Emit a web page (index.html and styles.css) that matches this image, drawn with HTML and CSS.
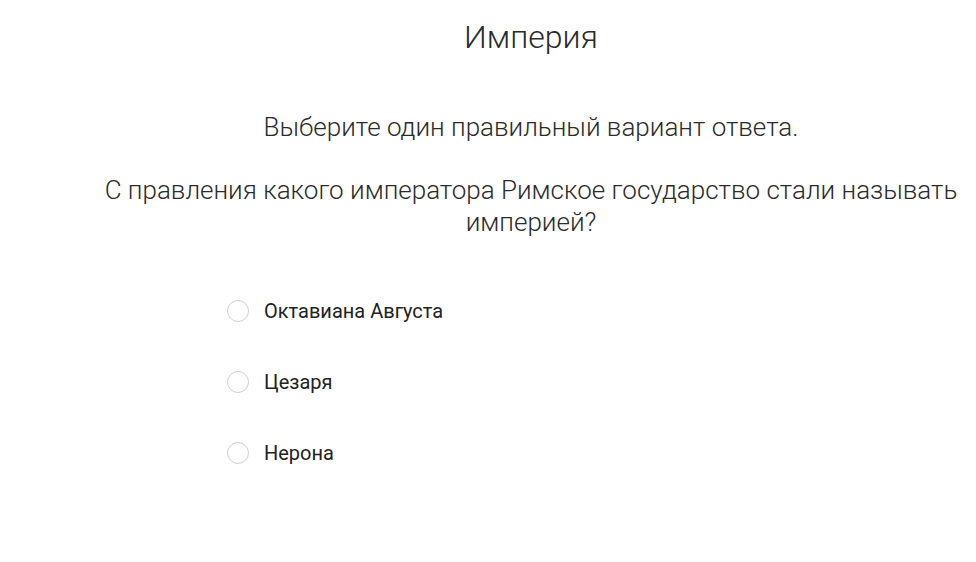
FILE: index.html
```html
<!DOCTYPE html>
<html lang="ru">
<head>
<meta charset="utf-8">
<title>Империя</title>
<link rel="stylesheet" href="styles.css">
</head>
<body>
<main class="quiz">
  <h1 class="title">Империя</h1>
  <p class="instruction">Выберите один правильный вариант ответа.</p>
  <p class="question">С правления какого императора Римское государство стали называть империей?</p>
  <ul class="options">
    <li class="option"><span class="radio"></span><span class="label">Октавиана Августа</span></li>
    <li class="option"><span class="radio"></span><span class="label">Цезаря</span></li>
    <li class="option"><span class="radio"></span><span class="label">Нерона</span></li>
  </ul>
</main>
</body>
</html>
```
FILE: styles.css
```css
html, body {
  margin: 0;
  padding: 0;
  background: #fff;
}
body {
  font-family: Roboto, "Liberation Sans", sans-serif;
  color: #222;
}
.quiz {
  width: 890px;
  margin-left: 86px;
  display: flex;
  flex-direction: column;
}
.title {
  margin: 18px 0 0;
  font-size: 32px;
  font-weight: 300;
  line-height: 38px;
  text-align: center;
  color: #2b2b2b;
}
.instruction {
  margin: 55px 0 0;
  font-size: 26px;
  font-weight: 300;
  line-height: 32px;
  text-align: center;
  color: #2b2b2b;
}
.question {
  margin: 31px 0 0;
  font-size: 26px;
  font-weight: 300;
  line-height: 32px;
  text-align: center;
  color: #2b2b2b;
}
.options {
  list-style: none;
  margin: 62px 0 0;
  padding: 0 0 0 141px;
  display: flex;
  flex-direction: column;
  gap: 49px;
}
.option {
  display: flex;
  align-items: center;
  height: 22px;
  font-size: 20px;
  font-weight: 400;
  color: #222;
}
.radio {
  border: 1px solid #d0d0d0;
  border-radius: 50%;
  box-sizing: border-box;
  width: 22px;
  height: 22px;
  margin-right: 15px;
}
```
